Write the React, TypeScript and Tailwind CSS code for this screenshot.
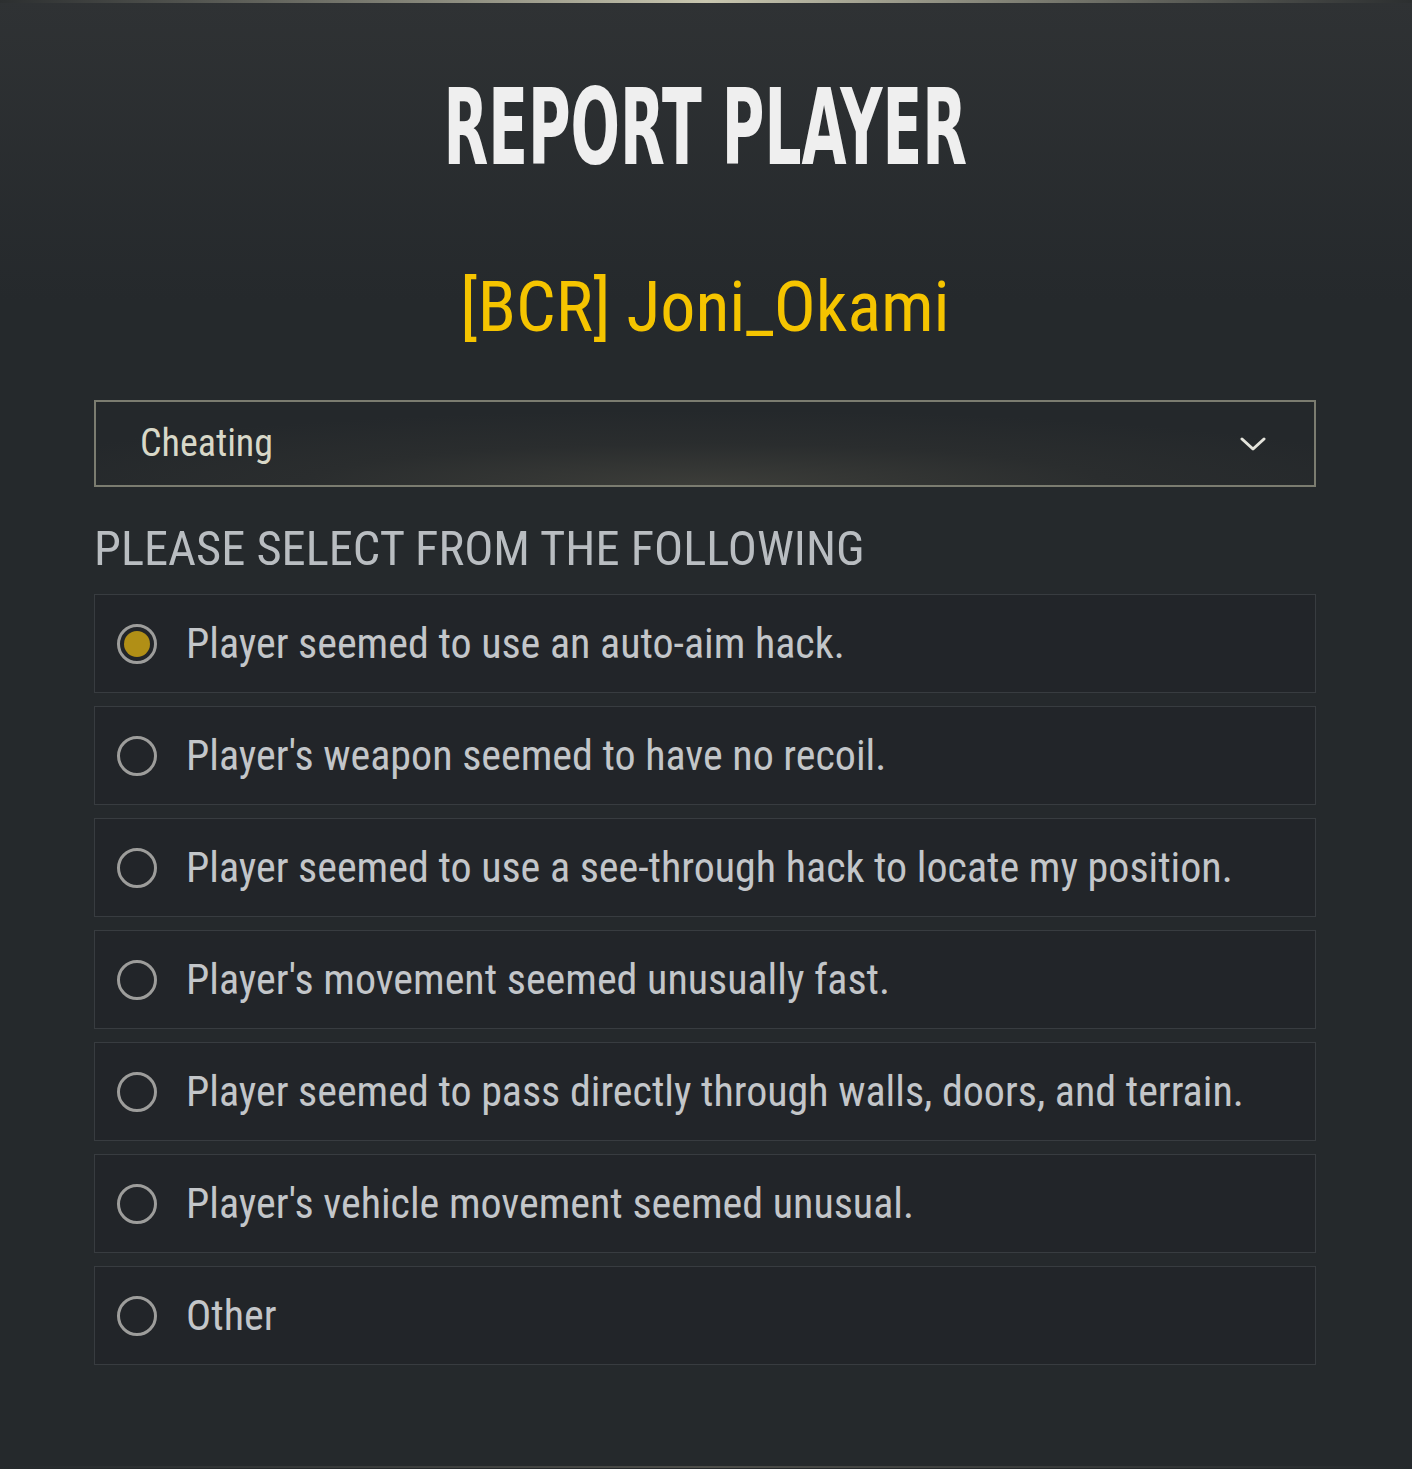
import React from "react";

const options = [
  "Player seemed to use an auto-aim hack.",
  "Player's weapon seemed to have no recoil.",
  "Player seemed to use a see-through hack to locate my position.",
  "Player's movement seemed unusually fast.",
  "Player seemed to pass directly through walls, doors, and terrain.",
  "Player's vehicle movement seemed unusual.",
  "Other",
];

const cond = { fontFamily: '"Roboto Condensed", "Liberation Sans Narrow", "DejaVu Sans Condensed", sans-serif' };

function Radio({ selected }: { selected: boolean }) {
  return (
    <div className="w-[40px] h-[40px] rounded-full border-[3px] border-[#9d9d9b] flex items-center justify-center shrink-0">
      {selected && <div className="w-[26px] h-[26px] rounded-full bg-[#b18f16]" />}
    </div>
  );
}

export default function App() {
  return (
    <div className="relative w-full h-[1469px] bg-[#25292c] overflow-hidden" style={cond}>
      <div className="absolute inset-x-0 top-0 h-[300px] bg-gradient-to-b from-[#2f3234] to-[#25292c]" />
      <div className="absolute inset-x-0 top-0 h-[3px] bg-gradient-to-r from-[#2c2f30] via-[#c9c7b0] to-[#2c2f30]" />
      <div className="absolute inset-x-0 bottom-[1px] h-[2px] bg-gradient-to-r from-[#25292c] via-[#4e4e4a] to-[#25292c]" />
      <div className="relative pl-[94px] pr-[96px] flex flex-col">
        <div className="h-[232px] flex justify-center items-start pt-[73px]">
          <div
            className="text-[106px] leading-[110px] font-bold text-[#efefef] scale-x-[0.61] whitespace-nowrap"
            style={{ fontFamily: '"Liberation Sans Narrow", "DejaVu Sans Condensed", sans-serif' }}
          >
            REPORT PLAYER
          </div>
        </div>
        <div className="h-[168px] flex justify-center items-start pt-[25px]">
          <div className="text-[70px] leading-[100px] text-[#f5c400] whitespace-nowrap">[BCR] Joni_Okami</div>
        </div>
        <div className="h-[87px] border-2 border-[#7b7c70] bg-[radial-gradient(ellipse_60%_90%_at_50%_100%,#3c3d39_0%,#2a2d2e_55%,#24282b_100%)] flex items-center justify-between pl-[44px] pr-[48px]">
          <span className="text-[38px] text-[#d8d8c8]">Cheating</span>
          <svg width="26" height="16" viewBox="0 0 26 16" fill="none">
            <polyline points="2,3 13,13 24,3" stroke="#e4e4dc" strokeWidth="3" strokeLinecap="round" strokeLinejoin="round" />
          </svg>
        </div>
        <div className="h-[107px] flex items-center pt-[18px]">
          <span className="text-[48.5px] text-[#b9bdc1] whitespace-nowrap">PLEASE SELECT FROM THE FOLLOWING</span>
        </div>
        <div className="flex flex-col gap-[13px]">
          {options.map((o, i) => (
            <div
              key={o}
              className="h-[99px] border border-[#383c40] bg-[#222529] flex items-center pl-[22px] gap-[29px]"
            >
              <Radio selected={i === 0} />
              <span className="text-[42px] text-[#c3c6c9] whitespace-nowrap">{o}</span>
            </div>
          ))}
        </div>
      </div>
    </div>
  );
}
